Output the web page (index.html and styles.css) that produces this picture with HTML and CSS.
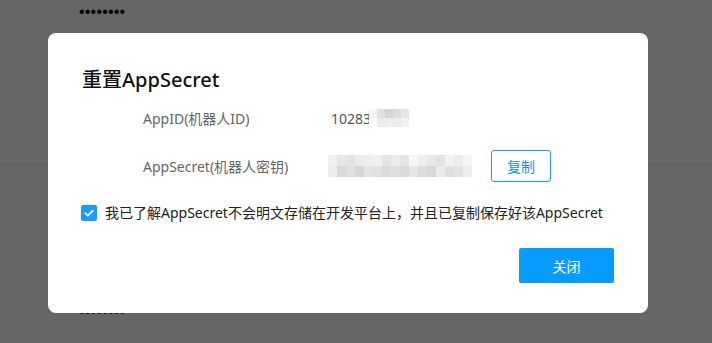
FILE: index.html
```html
<!DOCTYPE html>
<html lang="zh-CN">
<head>
<meta charset="utf-8">
<title>重置AppSecret</title>
<link rel="stylesheet" href="styles.css">
</head>
<body>
<div class="page">
  <div class="row"><span class="dots">••••••••</span></div>
  <div class="row"></div>
  <div class="row"></div>
  <div class="row"><span class="dots">••••••••</span></div>
</div>
<div class="overlay">
  <div class="dialog">
    <h2 class="title">重置AppSecret</h2>
    <div class="form">
      <div class="field">
        <span class="label">AppID(机器人ID)</span>
        <span class="value">10283</span>
        <span class="mosaic small">
          <i style="background:#f4f4f4"></i><i style="background:#e0e0e0"></i><i style="background:#d4d4d4"></i><i style="background:#dcdcdc"></i><i style="background:#e6e6e6"></i>
          <i style="background:#fbfbfb"></i><i style="background:#ececec"></i><i style="background:#f0f0f0"></i><i style="background:#ececec"></i><i style="background:#f2f2f2"></i>
        </span>
      </div>
      <div class="field">
        <span class="label">AppSecret(机器人密钥)</span>
        <span class="mosaic big">
          <i style="background:#f0f0f0"></i><i style="background:#e6e6e6"></i><i style="background:#e2e2e2"></i><i style="background:#ebebeb"></i><i style="background:#eeeeee"></i><i style="background:#f0f0f0"></i><i style="background:#e4e4e4"></i><i style="background:#ebebeb"></i><i style="background:#e5e5e5"></i><i style="background:#f6f6f6"></i><i style="background:#eeeeee"></i><i style="background:#e8e8e8"></i><i style="background:#e3e3e3"></i><i style="background:#f2f2f2"></i><i style="background:#ececec"></i><i style="background:#f5f5f5"></i>
          <i style="background:#ececec"></i><i style="background:#d8d8d8"></i><i style="background:#e0e0e0"></i><i style="background:#d6d6d6"></i><i style="background:#e4e4e4"></i><i style="background:#e1e1e1"></i><i style="background:#dadada"></i><i style="background:#dedede"></i><i style="background:#d9d9d9"></i><i style="background:#e6e6e6"></i><i style="background:#dcdcdc"></i><i style="background:#d7d7d7"></i><i style="background:#ebebeb"></i><i style="background:#dfdfdf"></i><i style="background:#e3e3e3"></i><i style="background:#eeeeee"></i>
        </span>
        <button class="btn-outline" type="button">复制</button>
      </div>
    </div>
    <div class="agree">
      <span class="checkbox">
        <svg width="16" height="16" viewBox="0 0 16 16"><rect width="16" height="16" rx="2" fill="#1a9cff"/><path d="M4.2 8.2 L6.9 10.7 L11.8 5.6" fill="none" stroke="#fff" stroke-width="1.8" stroke-linecap="round" stroke-linejoin="round"/></svg>
      </span>
      <span class="agree-text">我已了解AppSecret不会明文存储在开发平台上，并且已复制保存好该AppSecret</span>
    </div>
    <div class="footer">
      <button class="btn-primary" type="button">关闭</button>
    </div>
  </div>
</div>
</body>
</html>
```

FILE: styles.css
```css
* { box-sizing: border-box; }
html, body { margin: 0; padding: 0; }
body {
  background: #666666;
  font-family: "Noto Sans", "Noto Sans CJK SC", sans-serif;
  width: 712px;
  height: 343px;
  overflow: hidden;
}
.page {
  margin-top: -39px;
  height: 382px;
  overflow: hidden;
}
.row {
  height: 100px;
  border-bottom: 1px solid #6c6c6c;
  padding: 43px 0 0 79px;
}
.dots {
  display: block;
  font-family: "Liberation Sans", sans-serif;
  font-size: 16px;
  line-height: 16px;
  color: #000;
  letter-spacing: 0.2px;
}
.overlay {
  position: fixed;
  inset: 0;
  padding: 33px 0 0 48px;
}
.dialog {
  width: 600px;
  height: 280px;
  background: #fff;
  border-radius: 8px;
  padding: 33px 34px 30px 34px;
  display: flex;
  flex-direction: column;
}
.title {
  margin: 0;
  font-size: 20px;
  line-height: 28px;
  font-weight: 500;
  color: #111;
  font-family: "Noto Sans", "Noto Sans CJK SC", sans-serif;
}
.form {
  margin-top: 8px;
  padding-left: 61px;
  display: flex;
  flex-direction: column;
  gap: 16px;
}
.field {
  height: 32px;
  display: flex;
  align-items: center;
  font-size: 14px;
}
.label {
  width: 188px;
  color: #666;
}
.value {
  color: #555;
}
.mosaic {
  display: grid;
}
.mosaic i { display: block; }
.mosaic.small {
  grid-template-columns: repeat(5, 8px);
  grid-auto-rows: 9px;
  margin-left: -2px;
}
.mosaic.big {
  grid-template-columns: repeat(16, 9px);
  grid-auto-rows: 11px;
  margin-left: -3px;
}
.btn-outline {
  margin-left: 19px;
  width: 60px;
  height: 32px;
  border: 1px solid #1a9cff;
  border-radius: 3px;
  background: #fff;
  color: #1a8fe6;
  font-family: "Noto Sans CJK SC", sans-serif;
  font-size: 14px;
  padding: 0;
}
.agree {
  margin-top: 21px;
  display: flex;
  align-items: center;
  gap: 8px;
  height: 20px;
}
.checkbox {
  flex: none;
  width: 16px;
  height: 16px;
  display: block;
  margin-left: -1px;
}
.checkbox svg { display: block; }
.agree-text {
  font-size: 14px;
  color: #222;
  line-height: 20px;
  white-space: nowrap;
}
.footer {
  margin-top: auto;
  display: flex;
  justify-content: flex-end;
}
.btn-primary {
  width: 95px;
  height: 35px;
  border: 0;
  border-radius: 2px;
  background: #069dff;
  color: #fff;
  font-family: "Noto Sans CJK SC", sans-serif;
  font-size: 14px;
  padding: 0;
}
```
